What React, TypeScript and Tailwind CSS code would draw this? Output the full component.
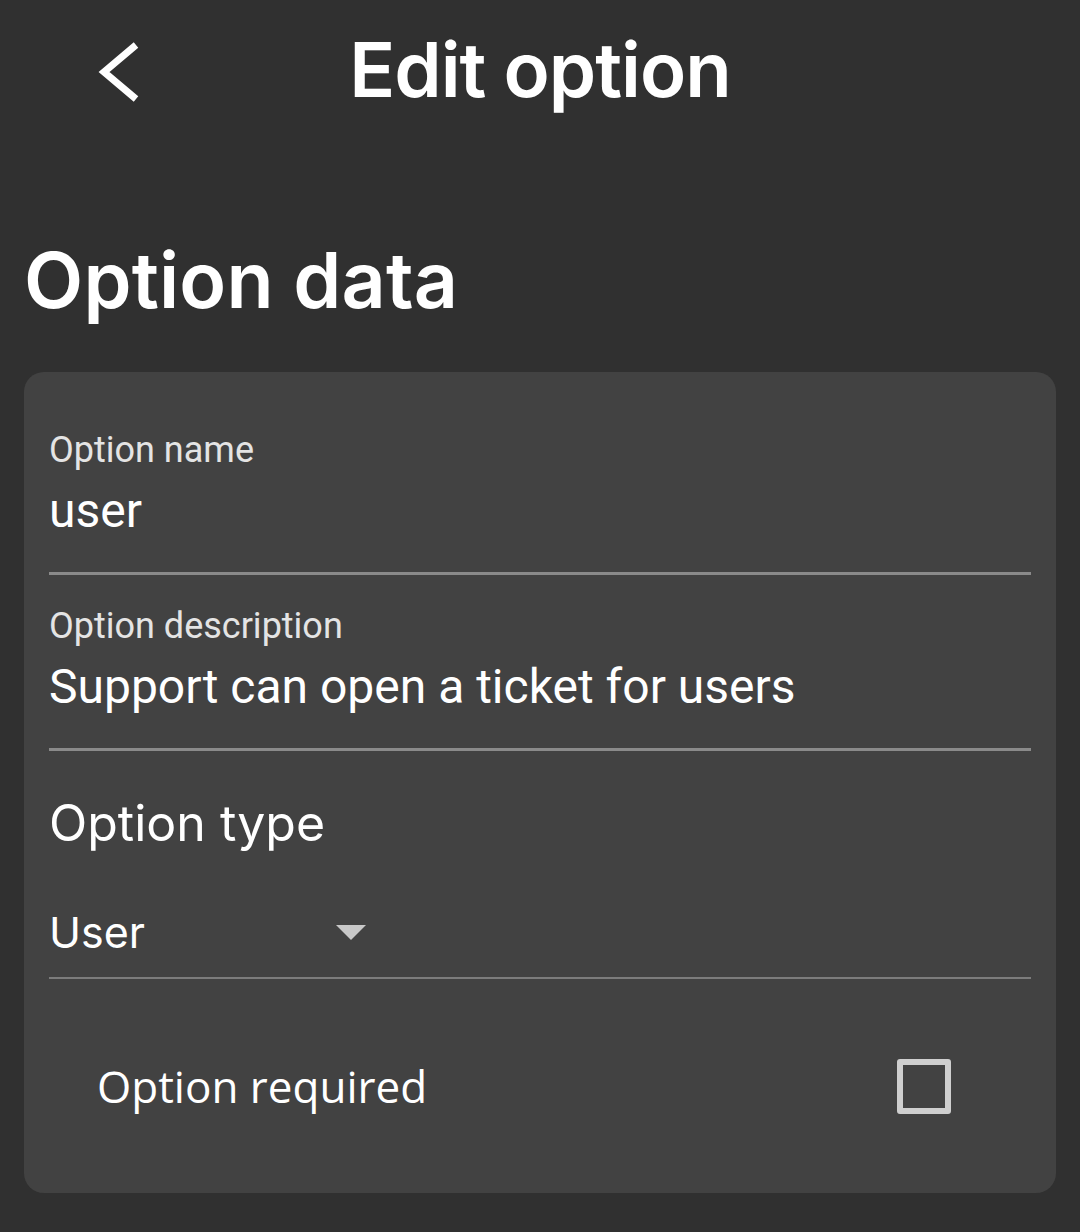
import React from 'react';

const heading = { fontFamily: 'Inter, "Open Sans", sans-serif' };
const roboto = { fontFamily: 'Roboto, "Liberation Sans", sans-serif' };
const openSans = { fontFamily: '"Open Sans", "Noto Sans", sans-serif' };

// text field with floating label and underline
const Field: React.FC<{ label: string; value: string }> = ({ label, value }) => (
  <div className="border-b-[3px] border-[#8a8a8a] pb-[33px] pt-[31px]" style={roboto}>
    <div className="h-[40px] text-[36px] leading-[40px] text-[#e4e4e4]">{label}</div>
    <div className="mt-[13px] h-[56px] text-[48px] leading-[56px] text-white">{value}</div>
  </div>
);

export default function App() {
  return (
    <div className="min-h-[1232px] w-full bg-[#303030] text-white">
      {/* header */}
      <div className="grid h-[150px] grid-cols-[1fr_auto_1fr] items-center pb-[6px]">
        <div className="pl-[98px]">
          <svg width="44" height="60" viewBox="0 0 44 60" fill="none">
            <path d="M38 3 L6 30 L38 57" stroke="#ffffff" strokeWidth="7" strokeLinejoin="miter" />
          </svg>
        </div>
        <div className="pb-[6px] text-[76px] font-semibold leading-none tracking-[-1px]" style={heading}>
          Edit option
        </div>
        <div />
      </div>

      <div className="pl-[24px] pt-[92px] text-[77px] font-semibold leading-[76px] tracking-[0.2px]" style={heading}>
        Option data
      </div>

      <div className="mx-[24px] mt-[54px] rounded-[20px] bg-[#424242] px-[25px] pb-[77px] pt-[27px]">
        <Field label="Option name" value="user" />
        <Field label="Option description" value="Support can open a ticket for users" />

        <div className="border-b-2 border-[#7c7c7c] pb-[19px] pt-[42px]">
          <div className="h-[60px] text-[50px] leading-[60px]" style={heading}>Option type</div>
          <div className="mt-[53px] flex h-[52px] items-center">
            <span className="w-[287px] text-[43px] leading-[52px]" style={heading}>User</span>
            <svg width="30" height="15" viewBox="0 0 30 15">
              <path d="M0 0 H30 L15 15 Z" fill="#c8c8c8" />
            </svg>
          </div>
        </div>

        <div className="mt-[77px] flex h-[60px] items-center justify-between pl-[48px] pr-[80px]">
          <span className="text-[44px] leading-[60px]" style={openSans}>Option required</span>
          <div className="h-[55px] w-[54px] rounded-[3px] border-[6px] border-[#cfcfcf]" />
        </div>
      </div>
    </div>
  );
}
